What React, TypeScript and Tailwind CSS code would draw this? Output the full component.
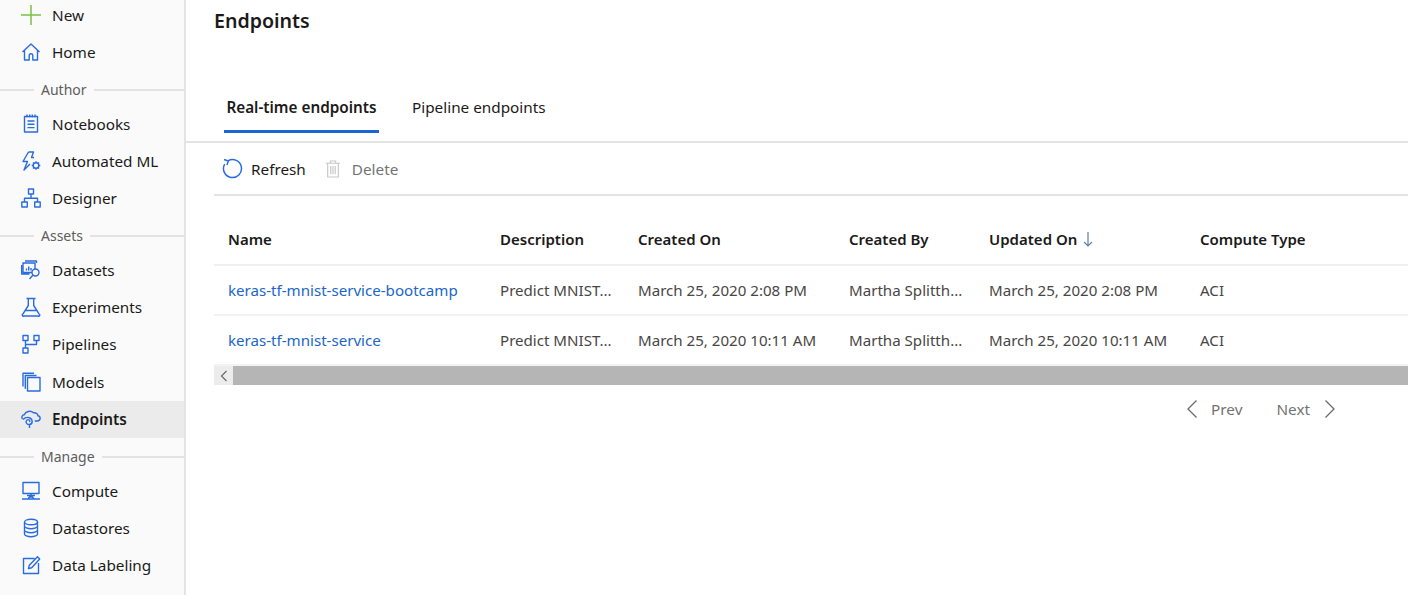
import type { ReactNode } from "react";

const BLUE = "#2a6be0";

function Icon({ children }: { children: ReactNode }) {
  return (
    <svg width="20" height="20" viewBox="0 0 20 20" fill="none" stroke={BLUE} strokeWidth="1.400" strokeLinejoin="round" className="shrink-0">
      {children}
    </svg>
  );
}

const icons: Record<string, ReactNode> = {
  home: <path d="M1.500 10 10 2l8.500 8M3.500 8.500V18h4.700v-4.500a1.800 1.800 0 0 1 3.600 0V18h4.700V8.500" />,
  notebooks: <path d="M3.500 3.500h13V19h-13zM6 1.500v3M8.700 1.500v3M11.300 1.500v3M14 1.500v3M6.500 8h7M6.500 11.300h7M6.500 14.600h7" />,
  automl: (
    <>
      <path d="M7.500 1 2 10.500h4.500L3 19l6-6M7.500 1h5l-2 5.500h2.500" />
      <circle cx="15" cy="14.500" r="2.800" />
      <path d="M15 10.200v1.500M15 17.300v1.500M10.700 14.500h1.500M17.800 14.500h1.500M12 11.500l1 1M17 16.500l1 1M18 11.500l-1 1M13 16.500l-1 1" />
    </>
  ),
  designer: <path d="M7.500 1h5v5h-5zM.8 14h5.500v5H.8zM13.700 14h5.500v5h-5.500zM10 6v4.300M3.500 14v-3.700h13V14" />,
  datasets: (
    <>
      <path d="M4 1h11.500v2M2 3h12v9.500H2zM.5 5v9h8" />
      <path d="M5.500 10.500V8.500M7.700 10.500V6.500M10 10.500V8" />
      <circle cx="14.500" cy="12.500" r="3.500" fill="#fafafa" />
      <path d="m12 15-3.500 4" />
    </>
  ),
  experiments: <path d="M5.500 1.500h9M7.300 1.500v7L2 16.800a1.200 1.200 0 0 0 1 2.200h14a1.200 1.200 0 0 0 1-2.200L12.700 8.500v-7M4.500 13.500h11" />,
  pipelines: <path d="M2 1.500h5V6.500H2zM13 1.500h5V6.500h-5zM2 14h5V19H2zM4.500 6.500V14M4.500 10.500h11v-4" />,
  models: (
    <>
      <path d="M6.500 5.500H19V19H6.500z" />
      <path d="M4.300 16.800V3.500H15.500M2 14.500V1.200H13" />
    </>
  ),
  endpoints: (
    <>
      <path d="M1.500 10C.200 8 1.200 6 3.300 5.800 4.500 2.500 9.500 1 12.500 3.800c2.200-.500 4.200 1 4.500 3 2.800.500 3 4.600-.3 5.200h-3" />
      <path d="M2 10.500c2-2 5-2.500 7-1.500 3 1.500 3 6-.500 6.500-3 .400-4.500-3-2.500-4.500 1.500-1 3.500.500 2.500 2M8.500 15.500V19" />
    </>
  ),
  compute: <path d="M2 1.500h16v11H2zM10 12.500V16M6 14.500h8M1 18h18M7 18l1.500-2h3l1.500 2" />,
  datastores: (
    <>
      <ellipse cx="10" cy="4" rx="6.500" ry="2.800" />
      <path d="M3.500 4v12c0 1.500 2.900 2.800 6.500 2.800s6.500-1.300 6.500-2.800V4M3.500 8c0 1.500 2.900 2.800 6.500 2.800s6.500-1.300 6.500-2.800M3.500 12c0 1.500 2.900 2.800 6.500 2.800s6.500-1.300 6.500-2.800" />
    </>
  ),
  labeling: <path d="M13.500 3.500H2.500V18.500h15V8M7.500 13.500l.8-3.200L16.500 1.800l2.200 2.200L10.700 12.700z" />,
};

function NavItem({ label, icon, active }: { label: string; icon: string; active?: boolean }) {
  return (
    <div className={`flex h-[37.4px] items-center gap-[11px] pl-[21px] text-[#1b1a19] ${active ? "bg-[#ebebeb] font-semibold" : ""}`}>
      <Icon>{icons[icon]}</Icon>
      <span className="pt-[1px]">{label}</span>
    </div>
  );
}

function Section({ label }: { label: string }) {
  return (
    <div className="flex h-[34px] items-center pt-[4px] text-[14px] text-[#605e5c]">
      <div className="h-[2px] w-[34px] bg-[#e3e3e3]" />
      <span className="px-[7px]">{label}</span>
      <div className="h-[2px] flex-1 bg-[#e3e3e3]" />
    </div>
  );
}

const columns = "grid grid-cols-[272px_138px_211px_140px_211px_1fr] items-center px-[14px]";

const rows = [
  { name: "keras-tf-mnist-service-bootcamp", created: "March 25, 2020 2:08 PM", updated: "March 25, 2020 2:08 PM" },
  { name: "keras-tf-mnist-service", created: "March 25, 2020 10:11 AM", updated: "March 25, 2020 10:11 AM" },
];

export default function App() {
  return (
    <div className="flex h-[595px] w-[1408px] overflow-hidden bg-white font-['Noto_Sans','Open_Sans',sans-serif] text-[15.300px]">
      <aside className="w-[186px] shrink-0 border-r-2 border-[#e3e3e3] bg-[#fafafa]">
        <div className="-mt-[4px]">
          <div className="flex h-[37.4px] items-center gap-[11px] pl-[21px] text-[#1b1a19]">
            <svg width="20" height="20" viewBox="0 0 20 20" stroke="#7ac143" strokeWidth="1.500" className="shrink-0">
              <path d="M10 0v20M0 10h20" />
            </svg>
            <span className="pt-[1px]">New</span>
          </div>
          <NavItem label="Home" icon="home" />
          <Section label="Author" />
          <NavItem label="Notebooks" icon="notebooks" />
          <NavItem label="Automated ML" icon="automl" />
          <NavItem label="Designer" icon="designer" />
          <Section label="Assets" />
          <NavItem label="Datasets" icon="datasets" />
          <NavItem label="Experiments" icon="experiments" />
          <NavItem label="Pipelines" icon="pipelines" />
          <NavItem label="Models" icon="models" />
          <NavItem label="Endpoints" icon="endpoints" active />
          <Section label="Manage" />
          <NavItem label="Compute" icon="compute" />
          <NavItem label="Datastores" icon="datastores" />
          <NavItem label="Data Labeling" icon="labeling" />
        </div>
      </aside>

      <main className="min-w-0 flex-1">
        <h1 className="ml-[28px] h-[84px] pt-[6px] text-[19.600px] leading-[30px] font-semibold text-[#1b1a19]">Endpoints</h1>

        <div className="flex h-[59px] border-b-2 border-[#e3e3e3] pl-[38px] text-[#1b1a19]">
          <div className="-mb-[10px] flex h-[49px] w-[155px] items-start justify-center border-b-[3px] border-[#1a66d6] pt-[12px] font-semibold whitespace-nowrap">
            Real-time endpoints
          </div>
          <div className="ml-[33px] pt-[12px]">Pipeline endpoints</div>
        </div>

        <div className="ml-[28px]">
          <div className="flex h-[53px] items-center border-b-2 border-[#e3e3e3] pl-[8px]">
            <svg width="21" height="21" viewBox="0 0 21 21" fill="none" stroke={BLUE} strokeWidth="1.500" className="shrink-0">
              <path d="M6 2.800a9 9 0 1 1-3.300 3.300" />
              <path d="M2 1.500 6.300 3 5 7" />
            </svg>
            <span className="ml-[8px] pt-[2px] text-[#1b1a19]">Refresh</span>
            <svg width="16" height="20" viewBox="0 0 18 20" fill="none" stroke="#c8c8c8" strokeWidth="1.300" className="ml-[19px] shrink-0">
              <path d="M1 3.500h16M6 3.500V1h6v2.500M3 3.500V19h12V3.500M6.500 6.500v9.500M9 6.500v9.500M11.500 6.500v9.500" />
            </svg>
            <span className="ml-[11px] pt-[2px] text-[#737373]">Delete</span>
          </div>

          <div className={`${columns} h-[70px] border-b-2 border-[#efefef] pt-[18px] text-[15px] leading-none font-semibold text-[#1b1a19]`}>
            <span>Name</span>
            <span>Description</span>
            <span>Created On</span>
            <span>Created By</span>
            <span className="flex items-center gap-[6px]">
              Updated On
              <svg width="10" height="16" viewBox="0 0 10 16" fill="none" stroke="#5f7fa8" strokeWidth="1.200">
                <path d="M5 1v14M1 11l4 4 4-4" />
              </svg>
            </span>
            <span>Compute Type</span>
          </div>

          {rows.map((row) => (
            <div key={row.name} className={`${columns} h-[50px] border-b-2 border-[#f3f3f3] text-[15.100px] text-[#484644]`}>
              <span className="text-[#1a66c9]">{row.name}</span>
              <span>Predict MNIST...</span>
              <span>{row.created}</span>
              <span>Martha Splitth...</span>
              <span>{row.updated}</span>
              <span>ACI</span>
            </div>
          ))}

          <div className="flex h-[19px] bg-[#b5b5b5]">
            <div className="flex w-[19px] items-center justify-center bg-[#ececec]">
              <svg width="8" height="12" viewBox="0 0 8 12" fill="none" stroke="#6b6b6b" strokeWidth="1.200">
                <path d="M6.500 1 1.500 6l5 5" />
              </svg>
            </div>
          </div>

          <div className="flex h-[48px] items-center justify-end pr-[72px] text-[#737373]">
            <svg width="12" height="20" viewBox="0 0 12 20" fill="none" stroke="#6b6b6b" strokeWidth="1.300">
              <path d="M10.500 1.500 2 10l8.500 8.500" />
            </svg>
            <span className="ml-[13px]">Prev</span>
            <span className="ml-[34px]">Next</span>
            <svg width="12" height="20" viewBox="0 0 12 20" fill="none" stroke="#6b6b6b" strokeWidth="1.300" className="ml-[14px]">
              <path d="M1.500 1.500 10 10l-8.500 8.500" />
            </svg>
          </div>
        </div>
      </main>
    </div>
  );
}
